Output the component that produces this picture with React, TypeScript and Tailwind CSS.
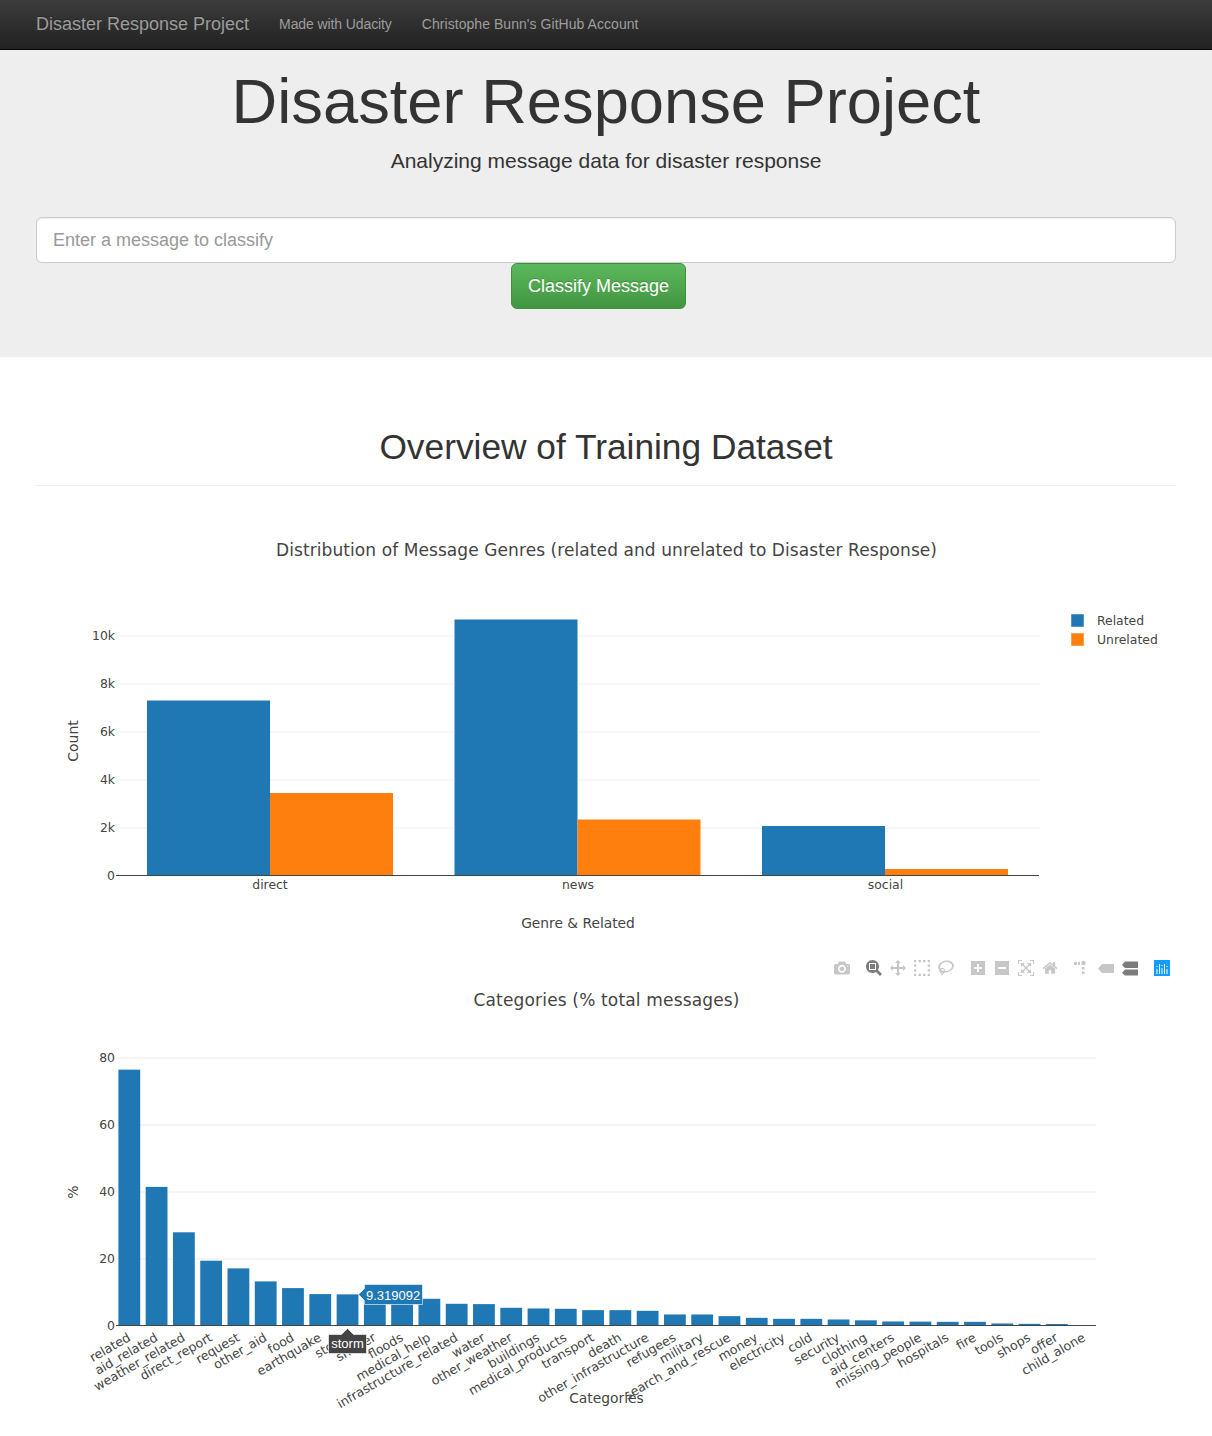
import React from 'react';

const SANS = { fontFamily: '"Liberation Sans", Arial, sans-serif' };
const PLOT_FONT = '"DejaVu Sans", Verdana, sans-serif';
const HOVER_FONT = '"Liberation Sans", Arial, sans-serif';

const genreBars = [
  { x: 147, w: 123, top: 700.5, color: '#1f77b4' },
  { x: 270, w: 123, top: 793, color: '#ff7f0e' },
  { x: 454.5, w: 123, top: 619.5, color: '#1f77b4' },
  { x: 577.5, w: 123, top: 819.5, color: '#ff7f0e' },
  { x: 762, w: 123, top: 826, color: '#1f77b4' },
  { x: 885, w: 123, top: 869, color: '#ff7f0e' },
];

const categories: [string, number][] = [
  ['related', 76.6],
  ['aid_related', 41.5],
  ['weather_related', 27.9],
  ['direct_report', 19.4],
  ['request', 17.1],
  ['other_aid', 13.2],
  ['food', 11.2],
  ['earthquake', 9.4],
  ['storm', 9.32],
  ['shelter', 8.9],
  ['floods', 8.2],
  ['medical_help', 8.0],
  ['infrastructure_related', 6.5],
  ['water', 6.4],
  ['other_weather', 5.3],
  ['buildings', 5.1],
  ['medical_products', 5.0],
  ['transport', 4.6],
  ['death', 4.6],
  ['other_infrastructure', 4.4],
  ['refugees', 3.3],
  ['military', 3.3],
  ['search_and_rescue', 2.8],
  ['money', 2.3],
  ['electricity', 2.0],
  ['cold', 2.0],
  ['security', 1.8],
  ['clothing', 1.55],
  ['aid_centers', 1.2],
  ['missing_people', 1.15],
  ['hospitals', 1.1],
  ['fire', 1.1],
  ['tools', 0.6],
  ['shops', 0.5],
  ['offer', 0.45],
  ['child_alone', 0],
];

function Tick({ x, y, label, anchor = 'end' }: { x: number; y: number; label: string; anchor?: 'start' | 'end' | 'middle' }) {
  return (
    <text x={x} y={y} textAnchor={anchor} fontSize={12.4} fill="#444" fontFamily={PLOT_FONT}>
      {label}
    </text>
  );
}

function ModeIcon({ x, width = 1000, d, fill = '#444', opacity = 0.3 }: { x: number; width?: number; d: string; fill?: string; opacity?: number }) {
  return (
    <svg x={x - 8} y={960} width={16} height={16} viewBox={`0 0 ${width} 1000`}>
      <path d={d} transform="matrix(1 0 0 -1 0 850)" fill={fill} fillOpacity={opacity} />
    </svg>
  );
}

function GenreChart() {
  return (
    <svg className="block" width={1140} height={450} viewBox="36 500 1140 450">
      <text x={606.5} y={555.5} textAnchor="middle" fontSize={17} textLength={661} fill="#444" fontFamily={PLOT_FONT}>
        Distribution of Message Genres (related and unrelated to Disaster Response)
      </text>
      {[636, 684, 732, 780, 828].map((y) => (
        <rect key={y} x={117} y={y - 0.5} width={923} height={1} fill="#eee" />
      ))}
      {[
        ['10k', 640],
        ['8k', 688],
        ['6k', 736],
        ['4k', 784],
        ['2k', 832],
        ['0', 880],
      ].map(([label, y]) => (
        <Tick key={label} x={115} y={Number(y)} label={String(label)} />
      ))}
      {genreBars.map((bar) => (
        <rect key={bar.x} x={bar.x} y={bar.top} width={bar.w} height={875.5 - bar.top} fill={bar.color} />
      ))}
      <rect x={116} y={875} width={923} height={1} fill="#444" />
      <Tick x={270} y={889} label="direct" anchor="middle" />
      <Tick x={578} y={889} label="news" anchor="middle" />
      <Tick x={885.5} y={889} label="social" anchor="middle" />
      <text x={578} y={928} textAnchor="middle" fontSize={13.8} fill="#444" fontFamily={PLOT_FONT}>
        Genre &amp; Related
      </text>
      <text transform="translate(78 741) rotate(-90)" textAnchor="middle" fontSize={14} fill="#444" fontFamily={PLOT_FONT}>
        Count
      </text>
      <rect x={1071.5} y={614.5} width={12} height={12} fill="#1f77b4" stroke="#1f77b4" strokeOpacity={0.5} />
      <rect x={1071.5} y={633.5} width={12} height={12} fill="#ff7f0e" stroke="#ff7f0e" strokeOpacity={0.5} />
      <Tick x={1097} y={625} label="Related" anchor="start" />
      <Tick x={1097} y={644} label="Unrelated" anchor="start" />
    </svg>
  );
}

function CategoryChart() {
  const step = 27.28;
  const start = 118.4;
  const barW = 21.8;
  return (
    <svg className="block" width={1140} height={460} viewBox="36 950 1140 460">
      <ModeIcon x={842} d="m500 450c-83 0-150-67-150-150 0-83 67-150 150-150 83 0 150 67 150 150 0 83-67 150-150 150z m400 150h-120c-16 0-34 13-39 29l-31 93c-6 15-23 28-40 28h-340c-16 0-34-13-39-28l-31-93c-6-16-23-29-40-29h-120c-55 0-100-45-100-100v-450c0-55 45-100 100-100h800c55 0 100 45 100 100v450c0 55-45 100-100 100z m-400-550c-138 0-250 112-250 250 0 138 112 250 250 250 138 0 250-112 250-250 0-138-112-250-250-250z m365 380c-19 0-35 16-35 35 0 19 16 35 35 35 19 0 35-16 35-35 0-19-16-35-35-35z" />
      <ModeIcon x={874} opacity={0.7} d="m1000-25l-250 251c40 63 63 138 63 218 0 224-182 406-407 406-224 0-406-182-406-406s183-406 407-406c80 0 155 22 218 62l250-250 125 125z m-812 250l0 438 437 0 0-438-437 0z m62 375l313 0 0-312-313 0 0 312z" />
      <ModeIcon x={898} d="m1000 350l-187 188 0-125-250 0 0 250 125 0-188 187-187-187 125 0 0-250-250 0 0 125-188-188 186-187 0 125 252 0 0-250-125 0 187-188 188 188-125 0 0 250 250 0 0-126 187 188z" />
      <ModeIcon x={922} d="m0 850l0-143 143 0 0 143-143 0z m286 0l0-143 143 0 0 143-143 0z m285 0l0-143 143 0 0 143-143 0z m286 0l0-143 143 0 0 143-143 0z m-857-286l0-143 143 0 0 143-143 0z m857 0l0-143 143 0 0 143-143 0z m-857-285l0-143 143 0 0 143-143 0z m857 0l0-143 143 0 0 143-143 0z m-857-286l0-143 143 0 0 143-143 0z m286 0l0-143 143 0 0 143-143 0z m285 0l0-143 143 0 0 143-143 0z m286 0l0-143 143 0 0 143-143 0z" />
      <ModeIcon x={946} width={1031} d="m1018 538c-36 207-290 336-568 286-277-48-473-256-436-463 10-57 36-108 76-151-13-66 11-137 68-183 34-28 75-41 114-42l-55-70 0 0c-2-1-3-2-4-3-10-14-8-34 5-45 14-11 34-8 45 4 1 1 2 3 2 5l0 0 113 140c16 11 31 24 45 40 4 3 6 7 8 11 48-3 100 0 151 9 278 48 473 255 436 462z m-624-379c-80 14-149 48-197 96 42 42 109 47 156 9 33-26 47-66 41-105z m-187-74c-19 16-33 37-39 60 50-32 109-55 174-68-42-25-95-24-135 8z m360 75c-34-7-69-9-102-8 8 62-16 128-68 170-73 59-175 54-244-5-9 20-16 40-20 61-28 159 121 317 333 354s407-60 434-217c28-159-121-318-333-355z" />
      <ModeIcon x={978} width={875} d="m1 787l0-875 875 0 0 875-875 0z m687-500l-187 0 0-187-125 0 0 187-188 0 0 125 188 0 0 187 125 0 0-187 187 0 0-125z" />
      <ModeIcon x={1002} width={875} d="m0 788l0-876 875 0 0 876-875 0z m688-500l-500 0 0 125 500 0 0-125z" />
      <ModeIcon x={1026} d="m250 850l-187 0-63 0 0-62 0-188 63 0 0 188 187 0 0 62z m688 0l-188 0 0-62 188 0 0-188 62 0 0 188 0 62-62 0z m-875-938l0 188-63 0 0-188 0-62 63 0 187 0 0 62-187 0z m875 188l0-188-188 0 0-62 188 0 62 0 0 62 0 188-62 0z m-125 188l-1 0-93-94-156 156 156 156 92-93 2 0 0 250-250 0 0-2 93-92-156-156-156 156 94 92 0 2-250 0 0-250 0 0 93 93 157-156-157-156-93 94 0 0 0-250 250 0 0 0-94 93 156 157 156-157-93-93 0 0 250 0 0 250z" />
      <ModeIcon x={1050} width={929} d="m786 296v-267q0-15-11-26t-25-10h-214v214h-143v-214h-214q-15 0-25 10t-11 26v267q0 1 0 2t0 2l321 264 321-264q1-1 1-4z m124 39l-34-41q-5-5-12-6h-2q-7 0-12 3l-386 322-386-322q-7-4-13-4-7 2-12 7l-35 41q-4 5-3 13t6 12l401 334q18 15 42 15t43-15l136-114v109q0 8 5 13t13 5h107q8 0 13-5t5-13v-227l122-102q5-5 6-12t-4-13z" />
      {/* spike lines */}
      <g fill="#444" fillOpacity={0.3}>
        <rect x={1074} y={962} width={3} height={3} />
        <rect x={1078} y={962} width={2} height={3} />
        <circle cx={1083.5} cy={963} r={2.2} />
        <rect x={1082} y={967} width={2.5} height={2.5} />
        <rect x={1082} y={971.5} width={2.5} height={2.5} />
      </g>
      {/* hover closest + compare */}
      <path d="M1098 968.5 L1102 964 H1114 V973 H1102 Z" fill="#444" fillOpacity={0.3} />
      <path d="M1122 965 L1125 961.5 H1138 V968 H1125 Z M1122 973 L1125 969.5 H1138 V975.5 H1125 Z" fill="#444" fillOpacity={0.7} />
      {/* plotly logo */}
      <rect x={1154} y={960} width={16} height={16} fill="#119dff" />
      <g fill="#fff">
        <rect x={1156.5} y={969} width={1} height={5} />
        <rect x={1159} y={964} width={1} height={10} />
        <rect x={1161.5} y={968} width={1} height={6} />
        <rect x={1164} y={964} width={1} height={10} />
        <rect x={1166.5} y={969} width={1} height={5} />
        <rect x={1156.5} y={966} width={1} height={1} />
        <rect x={1161.5} y={965} width={1} height={1} />
        <rect x={1166.5} y={966} width={1} height={1} />
      </g>

      <text x={606.5} y={1005.5} textAnchor="middle" fontSize={17} textLength={266} fill="#444" fontFamily={PLOT_FONT}>
        Categories (% total messages)
      </text>
      {[1058, 1125, 1192, 1259].map((y) => (
        <rect key={y} x={116} y={y - 0.5} width={980} height={1} fill="#eee" />
      ))}
      {[
        ['80', 1062],
        ['60', 1129],
        ['40', 1196],
        ['20', 1263],
        ['0', 1330],
      ].map(([label, y]) => (
        <Tick key={label} x={115} y={Number(y)} label={String(label)} />
      ))}
      {categories.map(([name, value], i) => {
        const x = start + i * step;
        const h = value * 3.34;
        return <rect key={name} x={x} y={1325.5 - h} width={barW} height={h} fill="#1f77b4" />;
      })}
      <rect x={116} y={1325} width={980} height={1} fill="#444" />
      {categories.map(([name], i) => {
        const cx = start + i * step + barW / 2;
        return (
          <text
            key={name}
            transform={`translate(${cx + 2} 1340) rotate(-30)`}
            textAnchor="end"
            fontSize={12.6}
            fill="#444"
            fontFamily={PLOT_FONT}
          >
            {name}
          </text>
        );
      })}
      <text x={606.5} y={1403} textAnchor="middle" fontSize={13.85} fill="#444" fontFamily={PLOT_FONT}>
        Categories
      </text>
      <text transform="translate(78 1192) rotate(-90)" textAnchor="middle" fontSize={14} fill="#444" fontFamily={PLOT_FONT}>
        %
      </text>

      {/* hover labels on storm */}
      <path d="M358.5 1294.5 L364.5 1288.5 V1284.5 H422.5 V1304.5 H364.5 V1300.5 Z" fill="#1f77b4" stroke="#fff" strokeOpacity={0.6} />
      <text x={366} y={1299.5} fontSize={13} fill="#fff" fontFamily={HOVER_FONT}>
        9.319092
      </text>
      <path d="M347.5 1328.5 L353.5 1334.5 H366.5 V1353.5 H328.5 V1334.5 H341.5 Z" fill="#444" stroke="#fff" strokeOpacity={0.6} />
      <text x={347.5} y={1348} textAnchor="middle" fontSize={13} fill="#fff" fontFamily={HOVER_FONT}>
        storm
      </text>
    </svg>
  );
}

export default function App() {
  return (
    <div className="min-h-[1436px] bg-white text-[#333]" style={SANS}>
      <nav className="flex h-[50px] items-center border-b border-[#080808] bg-gradient-to-b from-[#3c3c3c] to-[#222] px-9 text-[#9d9d9d]">
        <a className="text-[18px] [text-shadow:0_-1px_0_rgba(0,0,0,0.25)]">Disaster Response Project</a>
        <a className="ml-[30px] pb-[2px] text-sm tracking-[-0.1px]">Made with Udacity</a>
        <a className="ml-[30px] pb-[2px] text-sm tracking-[0.05px]">Christophe Bunn's GitHub Account</a>
      </nav>

      <section className="h-[307px] bg-[#eee] px-9 pt-[16px]">
        <h1 className="text-center text-[63.25px] leading-[70px] font-normal">Disaster Response Project</h1>
        <p className="mt-[13px] text-center text-[21px] leading-[24px] font-normal">Analyzing message data for disaster response</p>
        <input
          className="mt-[44px] block h-[46px] w-full rounded-md border border-[#ccc] bg-white px-4 text-[18px] shadow-[inset_0_1px_1px_rgba(0,0,0,0.075)] placeholder:text-[#999]"
          placeholder="Enter a message to classify"
          readOnly
        />
        <button className="ml-[475px] block h-[46px] w-[175px] rounded-md border border-[#3e8f3e] bg-gradient-to-b from-[#5cb85c] to-[#419641] text-[18px] text-white [text-shadow:0_-1px_0_rgba(0,0,0,0.2)]">
          Classify Message
        </button>
      </section>

      <main className="px-9">
        <div className="mt-[70px] border-b border-[#eee] pb-[18px]">
          <h1 className="text-center text-[35.3px] leading-[40px] font-normal">Overview of Training Dataset</h1>
        </div>
        <div className="mt-[14px]">
          <GenreChart />
          <CategoryChart />
        </div>
      </main>
    </div>
  );
}
